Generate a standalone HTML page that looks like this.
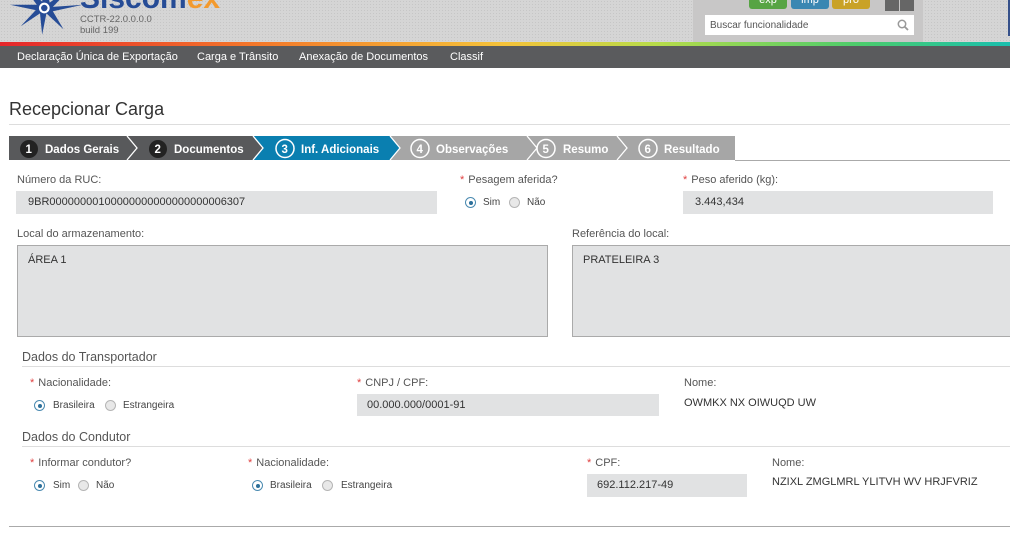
<!DOCTYPE html>
<html><head><meta charset="utf-8"><style>
*{margin:0;padding:0;box-sizing:border-box}
body{width:1010px;height:542px;overflow:hidden;background:#fff;font-family:"Liberation Sans",sans-serif;font-size:11px;color:#444;position:relative}
.a{position:absolute;white-space:nowrap}
.hdr{position:absolute;left:0;top:0;width:1010px;height:42px;background:#d5d5d5;background-image:radial-gradient(#c6c6c6 0.6px,transparent 0.8px);background-size:3px 3px}
.grad{position:absolute;left:0;top:42px;width:1010px;height:4px;background:linear-gradient(90deg,#e5262b,#f4772a 25%,#f5c33a 50%,#b7dc4a 65%,#4ccc6c 85%,#19bfae)}
.nav{position:absolute;left:0;top:46px;width:1010px;height:22px;background:#5a5b5d;color:#fff}
.nav span{position:absolute;top:5px;font-size:11px}
.lbl{color:#555;font-size:11px}
.req{color:#e04040;margin-right:4px}
.inp{position:absolute;background:#e1e2e3;color:#333;padding-left:12px;font-size:11px}
.ta{position:absolute;background:#e1e2e3;border:1px solid #aaa;color:#333;padding:8px 10px;font-size:11px}
.r{position:absolute;width:11px;height:11px;border-radius:50%;border:1px solid #b5b5b5;background:#e8e8e8}
.r.on{border-color:#4a8ab0;background:#fff}
.r.on:after{content:"";position:absolute;left:2.5px;top:2.5px;width:4px;height:4px;border-radius:50%;background:#2c6f9a}
.sec{position:absolute;left:22px;font-size:12.5px;color:#555}
.line{position:absolute;height:1px;background:#ddd}
.rt{position:absolute;white-space:nowrap;font-size:10px}
</style></head><body>
<div class="hdr"></div>
<svg class="a" style="left:10px;top:-20px" width="75" height="56" viewBox="0 0 70 50"><g fill="#264c96"><polygon points="33,0 37,20 58,5 40,24 68,22 40,28 50,45 34,30 30,50 28,30 10,42 24,27 0,22 25,22 12,4 30,19"/></g><circle cx="32" cy="25" r="5" fill="#fff"/><circle cx="32" cy="25" r="3" fill="#264c96"/></svg>
<div class="a" style="left:80px;top:-18px;font-size:30px;font-weight:bold;color:#264c96">Siscom<span style="color:#f39a2e">ex</span></div>
<div class="a" style="left:80px;top:14px;font-size:9.5px;color:#666;line-height:11px">CCTR-22.0.0.0.0<br>build 199</div>
<div class="a" style="left:693px;top:0;width:230px;height:42px;background:#c8c7c7"></div>
<div class="a" style="left:749px;top:-5px;width:38px;height:14px;background:#57a444;border-radius:3px;color:#fff;text-align:center;font-size:11px;line-height:10px">exp</div>
<div class="a" style="left:791px;top:-5px;width:38px;height:14px;background:#3a87b2;border-radius:3px;color:#fff;text-align:center;font-size:11px;line-height:10px">imp</div>
<div class="a" style="left:832px;top:-5px;width:38px;height:14px;background:#c9a227;border-radius:3px;color:#fff;text-align:center;font-size:11px;line-height:10px">pro</div>
<div class="a" style="left:885px;top:0;width:14px;height:11px;background:#666"></div>
<div class="a" style="left:900px;top:0;width:14px;height:11px;background:#666"></div>
<div class="a" style="left:705px;top:15px;width:209px;height:20px;background:#fff;color:#555;font-size:10px;padding:5px 5px">Buscar funcionalidade</div>
<svg class="a" style="left:897px;top:19px" width="12" height="12" viewBox="0 0 12 12"><circle cx="5" cy="5" r="3.7" fill="none" stroke="#999" stroke-width="1.5"/><line x1="7.7" y1="7.7" x2="11" y2="11" stroke="#999" stroke-width="1.8"/></svg>
<div class="a" style="left:1008px;top:0;width:2px;height:36px;background:#35508a"></div>
<div class="grad"></div>
<div class="nav"><span style="left:17px">Declaração Única de Exportação</span><span style="left:197px">Carga e Trânsito</span><span style="left:299px">Anexação de Documentos</span><span style="left:450px">Classif</span></div>
<div class="a" style="left:9px;top:99px;font-size:18px;color:#333">Recepcionar Carga</div>
<div class="line" style="left:9px;top:124px;width:1001px"></div>
<svg class="a" style="left:9px;top:136px" width="1001" height="26" viewBox="0 0 1001 26">
<rect x="726" y="24" width="275" height="1" fill="#aaa"/>
<polygon points="0,0 118,0 128,12 118,24 0,24" fill="#58595b"/>
<polygon points="118,0 244,0 254,12 244,24 118,24 128,12" fill="#58595b"/>
<polygon points="244,0 381,0 391,12 381,24 244,24 254,12" fill="#0a7fb0"/>
<polygon points="381,0 518,0 528,12 518,24 381,24 391,12" fill="#a6a6a6"/>
<polygon points="518,0 608,0 618,12 608,24 518,24 528,12" fill="#a6a6a6"/>
<polygon points="608,0 726,0 726,24 608,24 618,12" fill="#a6a6a6"/>
<g fill="none" stroke="#fff" stroke-width="1.3"><polyline points="118,0 128,12 118,24"/><polyline points="244,0 254,12 244,24"/><polyline points="381,0 391,12 381,24"/><polyline points="518,0 528,12 518,24"/><polyline points="608,0 618,12 608,24"/></g>
<circle cx="20" cy="13" r="9" fill="#222"/><circle cx="149" cy="13" r="9" fill="#222"/>
<g fill="none" stroke="#fff" stroke-width="1.5"><circle cx="276" cy="12.5" r="9"/><circle cx="411" cy="12.5" r="9"/><circle cx="537" cy="12.5" r="9"/><circle cx="639" cy="12.5" r="9"/></g>
<g fill="#fff" font-family="Liberation Sans" font-weight="bold" font-size="11.5"><text x="16.5" y="17">1</text><text x="145.5" y="17">2</text><text x="272.5" y="17">3</text><text x="407.5" y="17">4</text><text x="533.5" y="17">5</text><text x="635.5" y="17">6</text>
<text x="36" y="17">Dados Gerais</text><text x="165" y="17">Documentos</text><text x="292" y="17">Inf. Adicionais</text><text x="427" y="17">Observações</text><text x="554" y="17">Resumo</text><text x="655" y="17">Resultado</text></g>
</svg>
<div class="a lbl" style="left:17px;top:174px">Número da RUC:</div>
<div class="inp" style="left:16px;top:191px;width:421px;height:23px;line-height:23px">9BR00000000100000000000000000006307</div>
<div class="a lbl" style="left:460px;top:174px"><span class="req">*</span>Pesagem aferida?</div>
<div class="r on" style="left:465px;top:197px"></div><div class="rt" style="left:483px;top:197px">Sim</div>
<div class="r" style="left:509px;top:197px"></div><div class="rt" style="left:527px;top:197px">Não</div>
<div class="a lbl" style="left:683px;top:174px"><span class="req">*</span>Peso aferido (kg):</div>
<div class="inp" style="left:683px;top:191px;width:310px;height:23px;line-height:23px">3.443,434</div>
<div class="a lbl" style="left:17px;top:228px">Local do armazenamento:</div>
<div class="ta" style="left:17px;top:245px;width:531px;height:92px">ÁREA 1</div>
<div class="a lbl" style="left:572px;top:228px">Referência do local:</div>
<div class="ta" style="left:572px;top:245px;width:440px;height:92px">PRATELEIRA 3</div>
<div class="sec" style="top:350px">Dados do Transportador</div>
<div class="line" style="left:22px;top:366px;width:988px"></div>
<div class="a lbl" style="left:30px;top:377px"><span class="req">*</span>Nacionalidade:</div>
<div class="r on" style="left:34px;top:400px"></div><div class="rt" style="left:53px;top:400px">Brasileira</div>
<div class="r" style="left:105px;top:400px"></div><div class="rt" style="left:123px;top:400px">Estrangeira</div>
<div class="a lbl" style="left:357px;top:377px"><span class="req">*</span>CNPJ / CPF:</div>
<div class="inp" style="left:357px;top:394px;width:302px;height:22px;line-height:22px;padding-left:10px">00.000.000/0001-91</div>
<div class="a lbl" style="left:684px;top:377px">Nome:</div>
<div class="a" style="left:684px;top:397px;color:#333">OWMKX NX OIWUQD UW</div>
<div class="sec" style="top:430px">Dados do Condutor</div>
<div class="line" style="left:22px;top:446px;width:988px"></div>
<div class="a lbl" style="left:30px;top:457px"><span class="req">*</span>Informar condutor?</div>
<div class="r on" style="left:34px;top:480px"></div><div class="rt" style="left:53px;top:480px">Sim</div>
<div class="r" style="left:78px;top:480px"></div><div class="rt" style="left:96px;top:480px">Não</div>
<div class="a lbl" style="left:248px;top:457px"><span class="req">*</span>Nacionalidade:</div>
<div class="r on" style="left:252px;top:480px"></div><div class="rt" style="left:270px;top:480px">Brasileira</div>
<div class="r" style="left:322px;top:480px"></div><div class="rt" style="left:341px;top:480px">Estrangeira</div>
<div class="a lbl" style="left:587px;top:457px"><span class="req">*</span>CPF:</div>
<div class="inp" style="left:587px;top:474px;width:160px;height:23px;line-height:23px;padding-left:10px">692.112.217-49</div>
<div class="a lbl" style="left:772px;top:457px">Nome:</div>
<div class="a" style="left:772px;top:476px;color:#333">NZIXL ZMGLMRL YLITVH WV HRJFVRIZ</div>
<div class="line" style="left:9px;top:526px;width:1001px;background:#aaa"></div>
</body></html>
